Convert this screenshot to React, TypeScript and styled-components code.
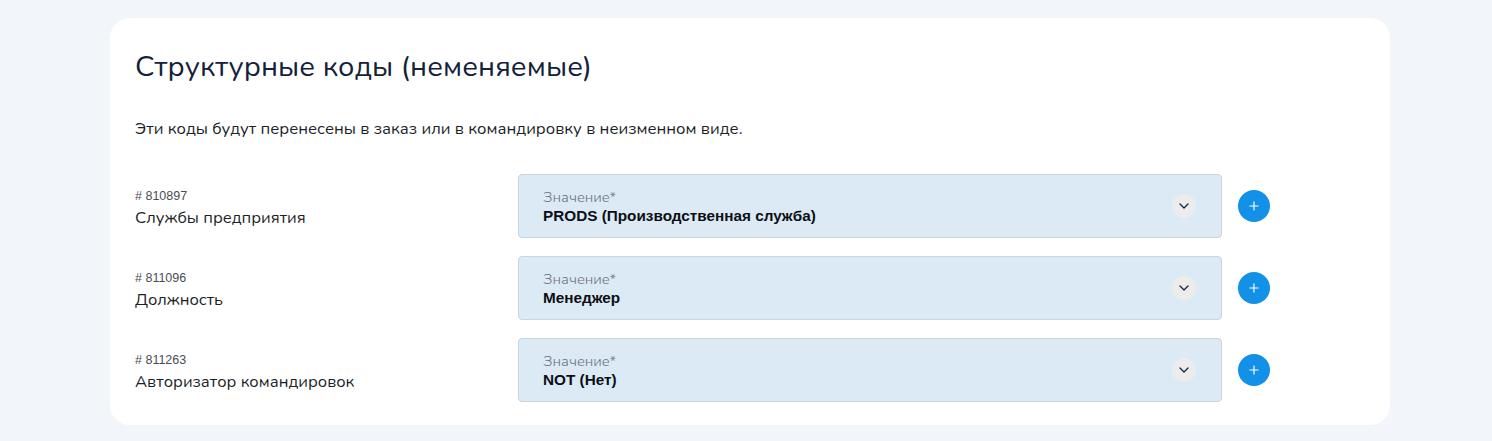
import styled, { createGlobalStyle } from 'styled-components';

const GlobalStyle = createGlobalStyle`
  html, body {
    margin: 0;
    padding: 0;
    background: #f2f5f9;
  }
  body {
    font-family: 'Nunito', 'Lato', 'Open Sans', sans-serif;
    color: #1c2230;
  }
`;

const Page = styled.div`
  padding: 18px 102px 17px 110px;
`;

const Card = styled.section`
  background: #ffffff;
  border-radius: 20px;
  padding: 30px 25px 23px;
`;

const Title = styled.h2`
  margin: 0;
  font-size: 29px;
  font-weight: 400;
  color: #13213a;
  line-height: 38px;
  letter-spacing: 0.1px;
`;

const Description = styled.p`
  margin: 32px 0 34px;
  font-size: 16.7px;
  line-height: 22px;
  color: #1c1f28;
`;

const Rows = styled.div`
  display: flex;
  flex-direction: column;
  gap: 18px;
`;

const Row = styled.div`
  display: flex;
  align-items: center;
`;

const LabelCol = styled.div`
  width: 383px;
  display: flex;
  flex-direction: column;
  gap: 3px;
  padding-top: 5px;
`;

const Code = styled.span`
  font-family: 'Liberation Sans', Arial, sans-serif;
  font-size: 12.5px;
  color: #4a4d55;
`;

const Name = styled.span`
  font-size: 16.6px;
  color: #1c1f28;
`;

const Select = styled.div`
  width: 704px;
  height: 64px;
  box-sizing: border-box;
  background: #dbeaf5;
  border: 1px solid #cbd5de;
  border-radius: 4px;
  display: flex;
  align-items: center;
  padding: 0 25px 0 24px;
`;

const SelectText = styled.div`
  flex: 1;
  display: flex;
  flex-direction: column;
  gap: 0;
`;

const Placeholder = styled.span`
  font-size: 14.8px;
  font-weight: 300;
  color: #6f737b;
`;

const Value = styled.span`
  font-family: 'Liberation Sans', Arial, sans-serif;
  font-size: 15.3px;
  font-weight: 700;
  color: #0d0f14;
`;

const Chevron = styled.span`
  width: 24px;
  height: 24px;
  border-radius: 50%;
  background: #ececec;
  display: flex;
  align-items: center;
  justify-content: center;
`;

const AddButton = styled.button`
  margin-left: 16px;
  width: 32px;
  height: 32px;
  border-radius: 50%;
  border: none;
  background: #1390e8;
  display: flex;
  align-items: center;
  justify-content: center;
  padding: 0;
  cursor: pointer;
`;

const items = [
  { code: '810897', name: 'Службы предприятия', value: 'PRODS (Производственная служба)' },
  { code: '811096', name: 'Должность', value: 'Менеджер' },
  { code: '811263', name: 'Авторизатор командировок', value: 'NOT (Нет)' },
];

export default function App() {
  return (
    <>
      <GlobalStyle />
      <Page>
        <Card>
          <Title>Структурные коды (неменяемые)</Title>
          <Description>
            Эти коды будут перенесены в заказ или в командировку в неизменном виде.
          </Description>
          <Rows>
            {items.map((it) => (
              <Row key={it.code}>
                <LabelCol>
                  <Code># {it.code}</Code>
                  <Name>{it.name}</Name>
                </LabelCol>
                <Select>
                  <SelectText>
                    <Placeholder>Значение*</Placeholder>
                    <Value>{it.value}</Value>
                  </SelectText>
                  <Chevron>
                    <svg width="10" height="6" viewBox="0 0 10 6" fill="none">
                      <path d="M1 1l4 4 4-4" stroke="#1c2540" strokeWidth="1.3" strokeLinecap="round" strokeLinejoin="round" />
                    </svg>
                  </Chevron>
                </Select>
                <AddButton>
                  <svg width="10" height="10" viewBox="0 0 10 10">
                    <path d="M5 0.5v9M0.5 5h9" stroke="#fff" strokeWidth="1.2" />
                  </svg>
                </AddButton>
              </Row>
            ))}
          </Rows>
        </Card>
      </Page>
    </>
  );
}
